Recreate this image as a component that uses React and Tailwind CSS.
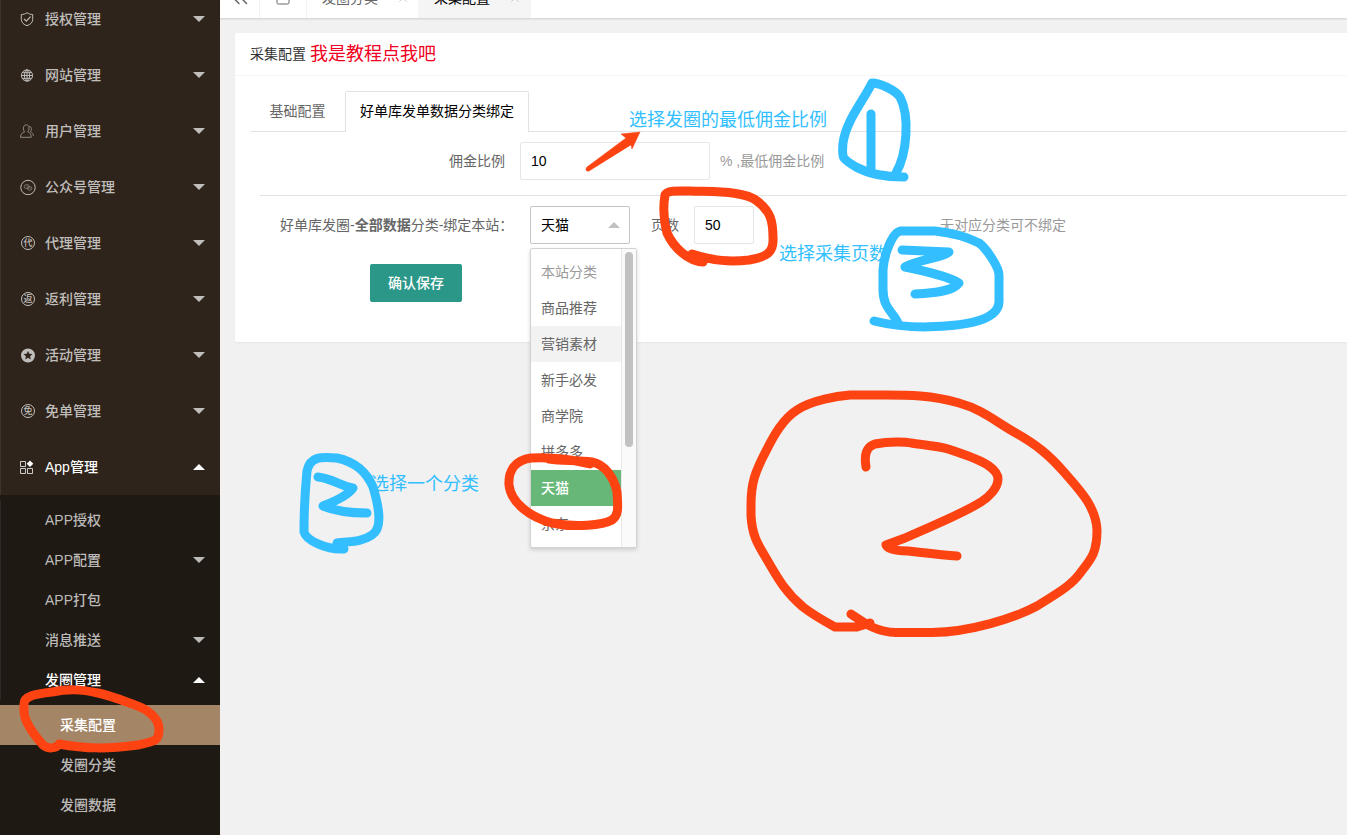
import React from "react";
import { ChevronsLeft, Square, X } from "lucide-react";

const iconProps = {
  width: 16,
  height: 16,
  viewBox: "0 0 16 16",
  fill: "none",
  stroke: "currentColor",
  strokeWidth: 1,
  "aria-hidden": true,
};

const narrowIconProps = { ...iconProps, width: 14, viewBox: "1 0 14 16" };

const GlyphIcon = ({ children }) => (
  <span aria-hidden="true" className="flex w-4 justify-center">
    <span className="flex size-3.5 items-center justify-center rounded-full border border-current text-[9px] leading-none">
      {children}
    </span>
  </span>
);

const icons = {
  shield: (
    <svg {...narrowIconProps}>
      <path d="M8 1.7C9.6 2.9 11.4 3.4 13.7 3.5V8.4C13.7 11.6 11.2 13.6 8 14.7 4.8 13.6 2.3 11.6 2.3 8.4V3.5C4.6 3.4 6.4 2.9 8 1.7Z" strokeLinejoin="round" />
      <path d="M5 7.8 7.3 10.1 11.6 5.6" strokeWidth="1.2" />
    </svg>
  ),
  globe: (
    <svg {...narrowIconProps}>
      <circle cx="8" cy="8.5" r="5.6" />
      <ellipse cx="8" cy="8.5" rx="2.6" ry="5.6" />
      <path d="M8 3V14M2.5 8.5H13.5M3.3 5.7H12.7M3.3 11.3H12.7" />
    </svg>
  ),
  users: (
    <svg {...narrowIconProps} opacity="0.65">
      <path d="M5.7 8.8C3.8 7.6 3.7 1.8 7.2 1.8S10.6 7.6 8.7 8.8C11.2 9.6 12.2 11.4 12.2 14.3H1.5C1.5 11.4 3 9.6 5.7 8.8Z" />
      <path d="M10 3.4C12.8 3.2 13 7.2 11.4 8.6 13.4 9.6 14.2 11 14.4 13" />
    </svg>
  ),
  wechat: (
    <svg {...iconProps}>
      <circle cx="8" cy="8.5" r="7.2" />
      <g opacity="0.65" strokeWidth="0.8">
        <ellipse cx="6.8" cy="7.6" rx="2.6" ry="2" />
        <ellipse cx="9.6" cy="9.4" rx="2.3" ry="1.8" />
        <path d="M6 7.4H6.6M7.4 7.4H8M8.9 9.4H9.4M10.2 9.4H10.7" />
      </g>
    </svg>
  ),
  agent: <GlyphIcon>代</GlyphIcon>,
  rebate: <GlyphIcon>返</GlyphIcon>,
  star: (
    <svg {...iconProps} stroke="none">
      <path
        fill="currentColor"
        fillRule="evenodd"
        d="M8 1.5A7 7 0 1 1 8 15.5 7 7 0 0 1 8 1.5ZM8 3.9 6.7 6.8 3.5 7.1 5.9 9.2 5.2 12.4 8 10.8 10.8 12.4 10.1 9.2 12.5 7.1 9.3 6.8Z"
      />
    </svg>
  ),
  free: <GlyphIcon>免</GlyphIcon>,
  app: (
    <svg {...narrowIconProps}>
      <path d="M1.5 2.5H6.5V7.5H1.5ZM1.5 9.5H6.5V14.5H1.5ZM8.5 9.5H13.5V14.5H8.5Z" opacity="0.75" />
      <path d="M11 1.5 14.3 4.8 11 8.1 7.7 4.8Z" fill="currentColor" stroke="none" />
    </svg>
  ),
};

const menu = [
  ["shield", "授权管理"],
  ["globe", "网站管理"],
  ["users", "用户管理"],
  ["wechat", "公众号管理"],
  ["agent", "代理管理"],
  ["rebate", "返利管理"],
  ["star", "活动管理"],
  ["free", "免单管理"],
];

const options = ["本站分类", "商品推荐", "营销素材", "新手必发", "商学院", "拼多多", "天猫", "京东"];

const Caret = ({ up }) => (
  <svg width="12" height="6" viewBox="0 0 12 6" fill="currentColor" aria-hidden="true">
    <path d={up ? "M0 6 6 0 12 6Z" : "M0 0 6 6 12 0Z"} />
  </svg>
);

function MenuLink({ icon, label, caret, active }) {
  return (
    <a
      href="#"
      className={`flex h-14 items-center border-l border-[#3d352d] pr-[15px] pl-[19px] font-medium ${active ? "text-white" : "text-[#c0bebb]"}`}
    >
      <span className="flex w-[25px] items-center">{icons[icon]}</span>
      <span className="flex-1">{label}</span>
      <Caret up={caret === "up"} />
    </a>
  );
}

function SubLink({ label, caret, active }) {
  return (
    <a
      href="#"
      className={`flex h-10 items-center justify-between border-l border-[#2f2a25] pr-[15px] pl-11 font-medium ${active ? "text-white" : "text-[#bcbbb9]"}`}
    >
      {label}
      {caret && <Caret up={caret === "up"} />}
    </a>
  );
}

function Sidebar() {
  return (
    <nav className="flex w-[220px] shrink-0 flex-col overflow-hidden bg-[#2e241c]">
      <div className="-mt-[9px] flex grow flex-col">
        {menu.map(([icon, label]) => (
          <MenuLink key={label} icon={icon} label={label} />
        ))}
        <MenuLink icon="app" label="App管理" caret="up" active />
        <div className="grow bg-[#1f1914] pt-[5px]">
          <SubLink label="APP授权" />
          <SubLink label="APP配置" caret="down" />
          <SubLink label="APP打包" />
          <SubLink label="消息推送" caret="down" />
          <SubLink label="发圈管理" caret="up" active />
          <div className="pt-[5px] font-medium text-[#bcbbb9]">
            <a href="#" className="flex h-10 items-center bg-[#a48667] pl-[60px] text-white">采集配置</a>
            <a href="#" className="flex h-10 items-center pl-[60px]">发圈分类</a>
            <a href="#" className="flex h-10 items-center pl-[60px]">发圈数据</a>
          </div>
        </div>
      </div>
    </nav>
  );
}

function TabBar() {
  return (
    <header className="flex h-[18px] items-end overflow-hidden bg-white text-[#666] shadow-[0_1px_2px_rgba(0,0,0,0.15)]">
      <button aria-label="向左滚动" className="flex h-10 w-10 shrink-0 items-center justify-center border-r border-[#f2f2f2]">
        <ChevronsLeft size={26} strokeWidth={1.4} />
      </button>
      <a href="#" aria-label="主页" className="flex h-10 w-[47px] shrink-0 items-center justify-center border-r border-[#f2f2f2]">
        <Square size={16} strokeWidth={1.5} />
      </a>
      <a href="#" className="flex h-10 w-[111px] shrink-0 items-center gap-[18px] pl-[15px]">
        发圈分类
        <X size={14} strokeWidth={1} className="text-[#aaa]" />
      </a>
      <a href="#" className="flex h-10 w-[113px] shrink-0 items-center gap-[18px] bg-[#f5f5f5] pl-4 text-black">
        采集配置
        <X size={14} strokeWidth={1} className="text-[#aaa]" />
      </a>
    </header>
  );
}

function CategorySelect() {
  return (
    <div className="relative w-[100px] shrink-0">
      <select
        aria-label="本站分类"
        defaultValue="天猫"
        className="h-[38px] w-full appearance-none rounded-[2px] border border-[#c4c4c4] bg-white px-2.5 text-black"
      >
        {options.map((o) => (
          <option key={o}>{o}</option>
        ))}
      </select>
      <span className="pointer-events-none absolute top-4 right-2.5 text-[#c2c2c2]">
        <Caret up />
      </span>
      <div className="absolute top-[42px] left-0 z-10 flex h-[300px] w-[107px] overflow-hidden rounded-[2px] border border-[#d2d2d2] bg-white shadow-[0_2px_4px_rgba(0,0,0,0.15)]">
        <ul role="listbox" aria-label="本站分类" className="flex-1 py-[5px] text-[#666]">
          {options.map((o, i) => (
            <li
              key={o}
              role="option"
              aria-selected={o === "天猫"}
              className={`flex h-9 items-center px-2.5 ${
                o === "天猫" ? "bg-[#67b878] font-medium text-white" : i === 2 ? "bg-[#f2f2f2]" : i === 0 ? "text-[#999]" : ""
              }`}
            >
              {o}
            </li>
          ))}
        </ul>
        <div className="w-[15px] border-l border-[#e8e8e8] bg-[#fafafa] px-[3px] py-[3px]">
          <div className="h-[195px] w-2 rounded-full bg-[#c1c1c1]" />
        </div>
      </div>
    </div>
  );
}

function ConfigCard() {
  return (
    <section className="mt-[15px] ml-[15px] rounded-l-[2px] bg-white shadow-[0_1px_2px_rgba(0,0,0,0.05)]">
      <h1 className="flex h-[43px] items-center gap-1 border-b border-[#f6f6f6] px-[15px] text-[#333]">
        采集配置
        <a href="#" className="text-lg text-[#f00020]">我是教程点我吧</a>
      </h1>
      <form className="pt-[15px] pb-10 pl-[15px]" onSubmit={(e) => e.preventDefault()}>
        <div role="tablist" className="flex h-[41px] items-stretch border-b border-[#e2e2e2]">
          <button type="button" role="tab" aria-selected="false" className="w-[95px] text-[#666]">
            基础配置
          </button>
          <button
            type="button"
            role="tab"
            aria-selected="true"
            className="-mb-px w-[184px] rounded-t-[2px] border border-b-0 border-[#e2e2e2] bg-white pb-0.5 text-black"
          >
            好单库发单数据分类绑定
          </button>
        </div>
        <div className="pt-2.5 pl-2.5">
          <div className="flex h-[38px] items-center">
            <label htmlFor="rate" className="w-[260px] pr-[15px] text-right text-[#666]">
              佣金比例
            </label>
            <input
              id="rate"
              defaultValue="10"
              className="h-[38px] w-[190px] rounded-[2px] border border-[#e6e6e6] bg-white px-2.5 text-black"
            />
            <span className="pl-2.5 text-[#999]">% ,最低佣金比例</span>
          </div>
          <hr className="mt-[15px] mb-2.5 border-[#e2e2e2]" />
          <div className="flex h-[38px] items-center text-[#666]">
            <span className="w-[270px] pl-5">
              好单库发圈-<b className="font-bold">全部数据</b>分类-绑定本站：
            </span>
            <CategorySelect />
            <label htmlFor="pages" className="w-16 pr-[15px] text-right">
              页数
            </label>
            <input
              id="pages"
              defaultValue="50"
              className="h-[38px] w-[60px] rounded-[2px] border border-[#e6e6e6] bg-white px-2.5 text-black"
            />
            <span className="pl-[186px] text-[#999]">无对应分类可不绑定</span>
          </div>
          <button
            type="submit"
            className="mt-5 ml-[110px] block h-[38px] rounded-[2px] bg-[#2b9788] px-[18px] font-medium text-white"
          >
            确认保存
          </button>
        </div>
      </form>
    </section>
  );
}

function Annotations() {
  return (
    <div className="pointer-events-none absolute inset-0 z-20 overflow-hidden text-lg leading-6 text-[#33bfff]">
      <span className="absolute top-[108px] left-[629px]">选择发圈的最低佣金比例</span>
      <span className="absolute top-[242px] left-[779px]">选择采集页数</span>
      <span className="absolute top-[472px] left-[371px]">选择一个分类</span>
      <svg
        width="1347"
        height="835"
        viewBox="0 0 1347 835"
        fill="none"
        strokeWidth="9"
        strokeLinecap="round"
        strokeLinejoin="round"
        className="absolute top-0 left-0"
        aria-hidden="true"
      >
        <g stroke="#fd4312">
          <path d="M59 744C56 749 48 749 43 745C36 737 24 723 24 711V704C24 696 35 694 52 692C68 689 80 689 98 693C112 696 124 701 135 705C147 709 159 718 159 729C159 740 157 741 138 745C107 749 86 749 59 744Z" />
          <path d="M703 262C688 261 674 248 667 233C664 222 663 207 665 195C667 190 677 191 690 191C716 192 745 191 757 201C771 211 773 222 773 238C774 253 766 257 749 260C730 262 714 261 692 254" />
          <path d="M590 464C570 459 553 457 531 458C516 460 508 470 509 485C511 503 530 517 552 523C575 528 603 525 612 520C619 515 618 507 617 492C614 477 604 464 592 462C577 460 562 461 549 459" />
          <path d="M866 467C864 455 866 447 875 444C890 441 907 442 911 443C925 445 938 446 948 449C965 455 979 459 989 466C996 471 998 475 998 479C998 488 989 497 981 502C956 517 931 526 905 538L886 545C887 549 897 551 908 551C926 553 942 555 957 556" />
          <path d="M851 614C863 622 875 632 896 632.500H932C970 632 1015 618 1037 606C1058 593 1072 585 1081 572C1092 558 1097 552 1097 530C1096 506 1078 488 1063 471C1049 455 1037 445 1014 432C995 421 981 409 959 403C932 395 907 395 885 395H850C838 396 812 400 797 410C783 419 774 435 766 451C755 472 751 483 751 505V515C752 537 759 546 766 558C775 573 783 590 803 607C812 614 824 621 835 627H857L870 623" />
        </g>
        <path d="M589 171C586 172 585 169 587 167L626 138 621 134 640 132 632 149 631 145Z" fill="#fd4312" stroke="#fd4312" strokeWidth="0.5" />
        <g stroke="#33bfff">
          <path d="M871 114V169M904 177C885 177 869 174 856 167C841 158 842 158 843 143C846 121 862 103 872 83C880 83 895 90 900 97C910 116 907 154 896 173" />
          <path d="M902 250 949 252C942 258 917 260 905 267C930 272 949 277 959 283C953 291 937 293 915 294M898 323C893 311 883 309 883 289V270C884 255 892 232 901 231H935C955 233 971 239 979 243C986 248 999 267 999 275V302C998 325 948 326 925 327C909 327 890 325 874 321" />
          <path d="M318 477C331 478 343 487 353 488C347 497 328 504 323 506C335 511 354 513 367 513M344 549C326 550 306 540 304 532C304 511 305 491 307 471C310 456 321 457 337 458C355 462 366 471 373 487C379 507 383 528 372 535C360 543 349 541 337 543" />
        </g>
      </svg>
    </div>
  );
}

export default function App() {
  return (
    <div className="relative flex h-screen overflow-hidden bg-[#f1f1f1] font-['Liberation_Sans','Noto_Sans_CJK_SC',sans-serif] text-sm">
      <Sidebar />
      <main className="min-w-0 flex-1">
        <TabBar />
        <ConfigCard />
      </main>
      <Annotations />
    </div>
  );
}
